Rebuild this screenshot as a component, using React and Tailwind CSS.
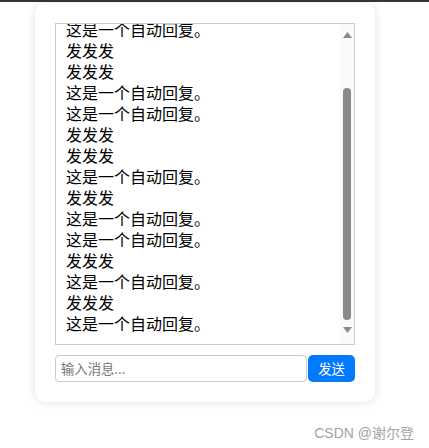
import React, { useState } from 'react';

const AUTO = '这是一个自动回复。';
const MINE = '发发发';

// scrolled to the bottom: the first of these lines is partly hidden above
const initialMessages = [
  AUTO, MINE, MINE, AUTO, AUTO, MINE, MINE, AUTO, MINE,
  AUTO, AUTO, MINE, AUTO, MINE, AUTO,
];

export default function App() {
  const [messages, setMessages] = useState(initialMessages);
  const [text, setText] = useState('');

  const send = () => {
    if (!text.trim()) return;
    setMessages([...messages, text, AUTO].slice(-15));
    setText('');
  };

  return (
    <div className="min-h-[448px] bg-white font-['Noto_Sans_CJK_SC','Noto_Sans',sans-serif]">
      <div className="h-[2px] bg-[#363636]" />

      {/* Chat card */}
      <div className="ml-[35px] mt-px w-[340px] rounded-[10px] bg-white p-5 shadow-[0_0_10px_rgba(0,0,0,0.12)]">
        <div className="flex h-[322px] w-[300px] border border-[#cccccc]">
          <div className="flex flex-1 flex-col justify-end overflow-hidden pb-[10px] pl-[10px]">
            {messages.map((m, i) => (
              <div key={i} className="text-[16px] leading-[21px] text-black whitespace-nowrap">
                {m}
              </div>
            ))}
          </div>

          {/* Scrollbar */}
          <div className="flex w-[14px] flex-col items-center bg-[#fafafa] pt-[8px] pb-[10px]">
            <svg width="9" height="6" viewBox="0 0 9 6">
              <path d="M0 6 L4.5 0 L9 6 Z" fill="#8a8a8a" />
            </svg>
            <div className="mt-[50px] h-[232px] w-[8px] rounded-full bg-[#8a8a8a]" />
            <svg className="mt-[7px]" width="9" height="6" viewBox="0 0 9 6">
              <path d="M0 0 L4.5 6 L9 0 Z" fill="#8a8a8a" />
            </svg>
          </div>
        </div>

        <div className="mt-[10px] flex h-[27px]">
          <input
            value={text}
            onChange={(e) => setText(e.target.value)}
            placeholder="输入消息..."
            className="h-full w-[252px] rounded-[4px] border border-[#cccccc] px-[5px] text-[13.33px] outline-none placeholder:text-[#757575]"
          />
          <button
            onClick={send}
            className="ml-px h-full flex-1 rounded-[5px] bg-[#007bff] text-[13.33px] text-white"
          >
            发送
          </button>
        </div>
      </div>

      <div className="mt-[21px] flex justify-end pr-[15px]">
        <span className="text-[14px] text-[#a3a3a3] font-['Liberation_Sans','Noto_Sans_CJK_SC',sans-serif]">
          CSDN @谢尔登
        </span>
      </div>
    </div>
  );
}
